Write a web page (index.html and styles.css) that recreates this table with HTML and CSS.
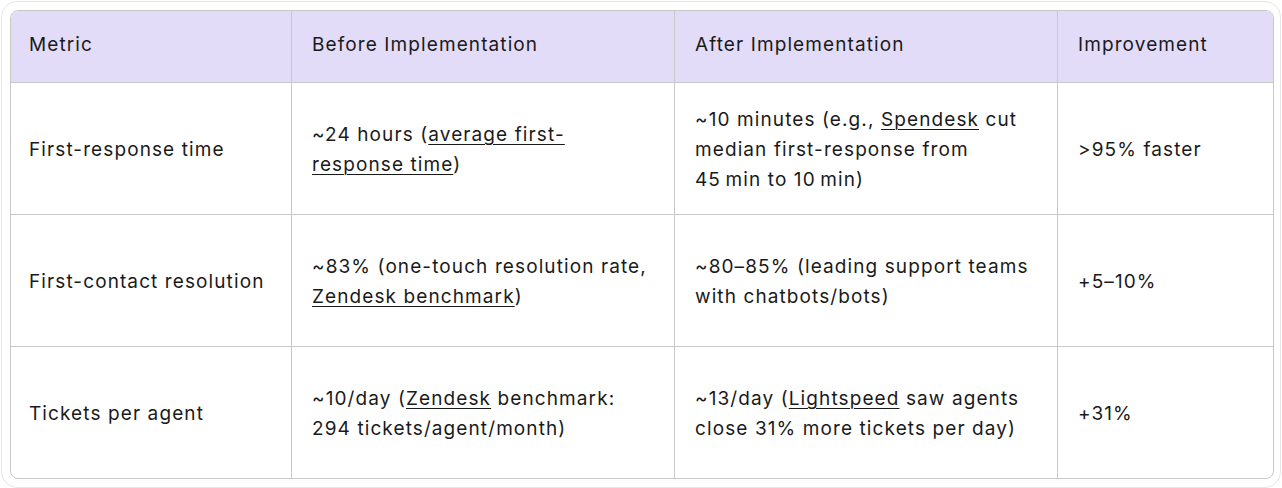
FILE: index.html
```html
<!DOCTYPE html>
<html lang="en">
<head>
<meta charset="utf-8">
<title>Support metrics</title>
<link rel="stylesheet" href="styles.css">
</head>
<body>
<div class="frame">
  <table class="metrics">
    <colgroup>
      <col class="c1"><col class="c2"><col class="c3"><col class="c4">
    </colgroup>
    <thead>
      <tr>
        <th>Metric</th>
        <th>Before Implementation</th>
        <th>After Implementation</th>
        <th>Improvement</th>
      </tr>
    </thead>
    <tbody>
      <tr>
        <td>First-response time</td>
        <td>~24 hours (<a href="#">average first-<br>response time</a>)</td>
        <td>~10 minutes (e.g., <a href="#">Spendesk</a> cut<br>median first-response from<br>45&#8239;min to 10&#8239;min)</td>
        <td>&gt;95% faster</td>
      </tr>
      <tr>
        <td>First-contact resolution</td>
        <td>~83% (one-touch resolution rate,<br><a href="#">Zendesk benchmark</a>)</td>
        <td>~80–85% (leading support teams<br>with chatbots/bots)</td>
        <td>+5–10%</td>
      </tr>
      <tr>
        <td>Tickets per agent</td>
        <td>~10/day (<a href="#">Zendesk</a> benchmark:<br>294 tickets/agent/month)</td>
        <td>~13/day (<a href="#">Lightspeed</a> saw agents<br>close 31% more tickets per day)</td>
        <td>+31%</td>
      </tr>
    </tbody>
  </table>
</div>
</body>
</html>
```

FILE: styles.css
```css
html, body {
  margin: 0;
  padding: 0;
  background: #ffffff;
}
body {
  font-family: "Inter", "Noto Sans", sans-serif;
  color: #1a1a1a;
}
.frame {
  margin: 1px;
  width: 1262px;
  padding: 8px;
  border: 1px solid #e6e6e6;
  border-radius: 16px;
  background: #ffffff;
}
.metrics {
  width: 1262px;
  table-layout: fixed;
  border-collapse: separate;
  border-spacing: 0;
  border: 1px solid #c8c8c8;
  border-radius: 8px;
  overflow: hidden;
  font-size: 19px;
  letter-spacing: 1.1px;
  line-height: 30px;
}
.c1 { width: 281px; }
.c2 { width: 383px; }
.c3 { width: 383px; }
.c4 { width: 215px; }
.metrics th,
.metrics td {
  padding: 2px 10px 0 20px;
  text-align: left;
  vertical-align: middle;
  font-weight: 400;
  white-space: nowrap;
  border-right: 1px solid #c8c8c8;
  border-bottom: 1px solid #c8c8c8;
  box-sizing: border-box;
}
.metrics th:first-child,
.metrics td:first-child {
  padding-left: 18px;
}
.metrics th:last-child,
.metrics td:last-child {
  border-right: none;
}
.metrics tbody tr:last-child td {
  border-bottom: none;
}
.metrics thead th {
  background: #e3dcf8;
  height: 72px;
  padding-top: 0;
  padding-bottom: 3px;
}
.metrics tbody td {
  height: 132px;
}
.metrics tbody tr:last-child td {
  height: 131px;
}
.metrics a {
  color: #1a1a1a;
  text-decoration: underline;
  text-underline-offset: 3px;
  text-decoration-thickness: 1px;
}
```
